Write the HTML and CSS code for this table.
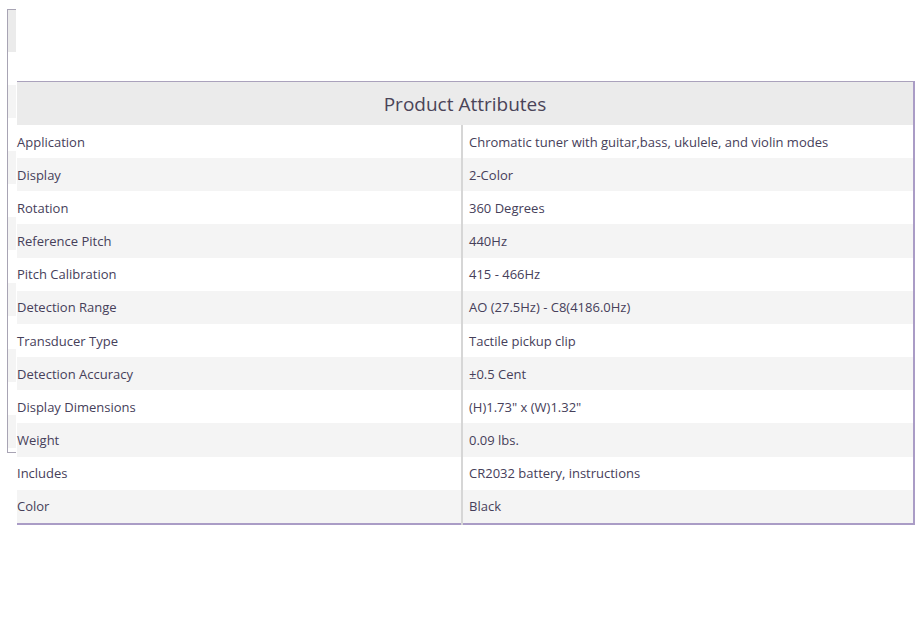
FILE: index.html
```html
<!DOCTYPE html>
<html>
<head>
<meta charset="utf-8">
<link rel="stylesheet" href="styles.css">
</head>
<body>
<div class="page">
  <div class="ghost">
    <div class="g-head"></div>
    <div class="g-row"></div>
    <div class="g-row g-alt"></div>
    <div class="g-row"></div>
    <div class="g-row g-alt"></div>
    <div class="g-row"></div>
    <div class="g-row g-alt"></div>
    <div class="g-row"></div>
    <div class="g-row g-alt"></div>
    <div class="g-row"></div>
    <div class="g-row g-alt"></div>
    <div class="g-row"></div>
    <div class="g-row g-alt"></div>
  </div>
  <table class="attrs">
    <thead>
      <tr><th colspan="2">Product Attributes</th></tr>
    </thead>
    <tbody>
      <tr><td class="k">Application</td><td class="v">Chromatic tuner with guitar,bass, ukulele, and violin modes</td></tr>
      <tr class="alt"><td class="k">Display</td><td class="v">2-Color</td></tr>
      <tr><td class="k">Rotation</td><td class="v">360 Degrees</td></tr>
      <tr class="alt"><td class="k">Reference Pitch</td><td class="v">440Hz</td></tr>
      <tr><td class="k">Pitch Calibration</td><td class="v">415 - 466Hz</td></tr>
      <tr class="alt"><td class="k">Detection Range</td><td class="v">AO (27.5Hz) - C8(4186.0Hz)</td></tr>
      <tr><td class="k">Transducer Type</td><td class="v">Tactile pickup clip</td></tr>
      <tr class="alt"><td class="k">Detection Accuracy</td><td class="v">±0.5 Cent</td></tr>
      <tr><td class="k">Display Dimensions</td><td class="v">(H)1.73" x (W)1.32"</td></tr>
      <tr class="alt"><td class="k">Weight</td><td class="v">0.09 lbs.</td></tr>
      <tr><td class="k">Includes</td><td class="v">CR2032 battery, instructions</td></tr>
      <tr class="alt"><td class="k">Color</td><td class="v">Black</td></tr>
    </tbody>
  </table>
</div>
</body>
</html>
```

FILE: styles.css
```css
html, body {
  margin: 0;
  padding: 0;
  background: #ffffff;
}

body {
  font-family: "Open Sans", "Noto Sans", sans-serif;
  color: #46405a;
}

.page {
  position: relative;
  padding: 81px 8px 0 17px;
}

.ghost {
  position: absolute;
  left: 7px;
  top: 9px;
  width: 8px;
  height: 442px;
  border-left: 1px solid #a8a4b4;
  border-top: 1px solid #a8a4b4;
  border-bottom: 1px solid #a8a4b4;
  overflow: hidden;
}

.g-head {
  height: 42px;
  background: #ebebeb;
}

.g-row {
  height: 33px;
}

.g-alt {
  background: #f4f4f4;
}

.attrs {
  width: 898px;
  border-collapse: collapse;
  border-top: 1px solid #aaa2bc;
  border-right: 2px solid #aa9cc6;
  border-bottom: 2px solid #aa9cc6;
  font-size: 13px;
  position: relative;
  background: #ffffff;
}

.attrs th {
  height: 43px;
  padding: 0;
  background: #ebebeb;
  font-weight: normal;
  font-size: 19px;
  color: #4a4458;
  text-align: center;
}

.attrs td {
  height: 33.17px;
  padding: 0;
  vertical-align: middle;
}

.attrs tr.alt td {
  background: #f4f4f4;
}

.attrs td.k {
  width: 444px;
}

.attrs td.v {
  border-left: 2px solid #d6d6d6;
  padding-left: 6px;
}
```
